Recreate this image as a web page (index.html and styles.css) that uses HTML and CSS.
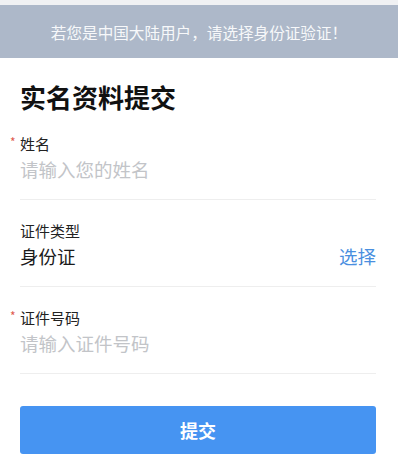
FILE: index.html
```html
<!DOCTYPE html>
<html lang="zh-CN">
<head>
<meta charset="utf-8">
<title>实名资料提交</title>
<link rel="stylesheet" href="styles.css">
</head>
<body>
<div class="page">
  <div class="topline"></div>
  <div class="banner">若您是中国大陆用户，请选择身份证验证！</div>
  <div class="content">
    <h1 class="title">实名资料提交</h1>
    <div class="field">
      <div class="label required">姓名</div>
      <div class="value placeholder">请输入您的姓名</div>
    </div>
    <div class="field">
      <div class="label">证件类型</div>
      <div class="value row">
        <span>身份证</span>
        <span class="select">选择</span>
      </div>
    </div>
    <div class="field">
      <div class="label required">证件号码</div>
      <div class="value placeholder">请输入证件号码</div>
    </div>
    <button class="submit">提交</button>
  </div>
</div>
</body>
</html>
```
FILE: styles.css
```css
html, body {
  margin: 0;
  padding: 0;
  background: #ffffff;
}
body {
  font-family: "Noto Sans CJK SC", "Noto Sans", sans-serif;
  color: #222222;
}
.page {
  width: 398px;
}
.topline {
  height: 5px;
  background: #f0f1f3;
}
.banner {
  height: 53px;
  background: #adb8c9;
  color: #f7f8fa;
  font-size: 15.6px;
  display: flex;
  align-items: center;
  justify-content: center;
}
.content {
  width: 356px;
  margin-left: 20px;
}
.title {
  margin: 22px 0 0;
  font-size: 26px;
  line-height: 33px;
  font-weight: 700;
  color: #111111;
}
.field {
  padding: 20px 0 17px;
  border-bottom: 1px solid #eeeeee;
}
.label {
  font-size: 15px;
  line-height: 21px;
  color: #222222;
}
.label.required::before {
  content: "*";
  display: inline-block;
  width: 10px;
  margin-left: -10px;
  color: #e05a4e;
  font-size: 12px;
  line-height: 12px;
  vertical-align: top;
  padding-top: 3px;
}
.value {
  margin-top: 2px;
  font-size: 18.5px;
  line-height: 26px;
  color: #1a1a1a;
}
.placeholder {
  color: #c2c4c8;
}
.row {
  display: flex;
  justify-content: space-between;
}
.select {
  color: #4a8fdf;
}
.submit {
  display: block;
  width: 356px;
  height: 48px;
  margin-top: 32px;
  border: none;
  border-radius: 3px;
  background: #4694f2;
  color: #ffffff;
  font-family: "Noto Sans CJK SC", "Noto Sans", sans-serif;
  font-size: 18px;
  font-weight: 700;
  padding: 0;
}
```
